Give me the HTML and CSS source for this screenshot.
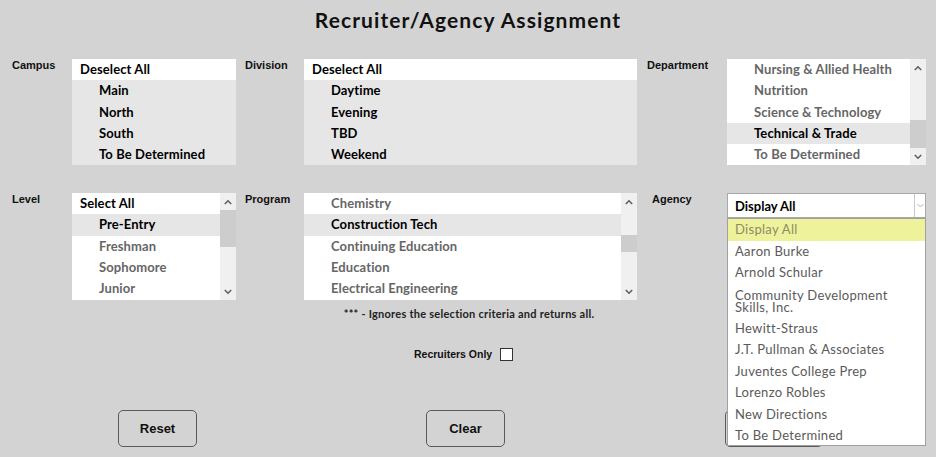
FILE: index.html
```html
<!DOCTYPE html>
<html lang="en">
<head>
<meta charset="utf-8">
<title>Recruiter/Agency Assignment</title>
<link rel="stylesheet" href="styles.css">
</head>
<body>
<div class="page">
  <h1 class="title">Recruiter/Agency Assignment</h1>

  <div class="grid">
    <div class="lbl">Campus</div>
    <div class="list">
      <div class="list-body">
        <div class="opt head">Deselect All</div>
        <div class="opt sel">Main</div>
        <div class="opt sel">North</div>
        <div class="opt sel">South</div>
        <div class="opt sel">To Be Determined</div>
      </div>
    </div>
    <div class="lbl lbl-mid">Division</div>
    <div class="list">
      <div class="list-body">
        <div class="opt head">Deselect All</div>
        <div class="opt sel">Daytime</div>
        <div class="opt sel">Evening</div>
        <div class="opt sel">TBD</div>
        <div class="opt sel">Weekend</div>
      </div>
    </div>
    <div class="lbl lbl-right">Department</div>
    <div class="list">
      <div class="list-body">
        <div class="opt">Nursing &amp; Allied Health</div>
        <div class="opt">Nutrition</div>
        <div class="opt">Science &amp; Technology</div>
        <div class="opt sel">Technical &amp; Trade</div>
        <div class="opt">To Be Determined</div>
      </div>
      <div class="sb">
        <div class="sb-arrow"><svg width="8" height="6" viewBox="0 0 8 6"><polyline points="0.8,5 4,1.8 7.2,5" fill="none" stroke="#606060" stroke-width="1.6"/></svg></div>
        <div class="sb-track"><div class="thumb thumb-dept"></div></div>
        <div class="sb-arrow"><svg width="8" height="6" viewBox="0 0 8 6"><polyline points="0.8,1 4,4.2 7.2,1" fill="none" stroke="#606060" stroke-width="1.6"/></svg></div>
      </div>
    </div>

    <div class="lbl row2">Level</div>
    <div class="list row2">
      <div class="list-body">
        <div class="opt head">Select All</div>
        <div class="opt sel">Pre-Entry</div>
        <div class="opt">Freshman</div>
        <div class="opt">Sophomore</div>
        <div class="opt">Junior</div>
      </div>
      <div class="sb">
        <div class="sb-arrow"><svg width="8" height="6" viewBox="0 0 8 6"><polyline points="0.8,5 4,1.8 7.2,5" fill="none" stroke="#606060" stroke-width="1.6"/></svg></div>
        <div class="sb-track"><div class="thumb thumb-level"></div></div>
        <div class="sb-arrow"><svg width="8" height="6" viewBox="0 0 8 6"><polyline points="0.8,1 4,4.2 7.2,1" fill="none" stroke="#606060" stroke-width="1.6"/></svg></div>
      </div>
    </div>
    <div class="lbl lbl-mid row2">Program</div>
    <div class="list row2">
      <div class="list-body">
        <div class="opt">Chemistry</div>
        <div class="opt sel">Construction Tech</div>
        <div class="opt">Continuing Education</div>
        <div class="opt">Education</div>
        <div class="opt">Electrical Engineering</div>
      </div>
      <div class="sb">
        <div class="sb-arrow"><svg width="8" height="6" viewBox="0 0 8 6"><polyline points="0.8,5 4,1.8 7.2,5" fill="none" stroke="#606060" stroke-width="1.6"/></svg></div>
        <div class="sb-track"><div class="thumb thumb-prog"></div></div>
        <div class="sb-arrow"><svg width="8" height="6" viewBox="0 0 8 6"><polyline points="0.8,1 4,4.2 7.2,1" fill="none" stroke="#606060" stroke-width="1.6"/></svg></div>
      </div>
    </div>
    <div class="lbl lbl-agency row2">Agency</div>
    <div class="select-wrap row2">
      <div class="select">
        <span class="select-val">Display All</span>
        <span class="select-btn"><svg width="7" height="5" viewBox="0 0 7 5"><polyline points="0.5,1 3.5,4 6.5,1" fill="none" stroke="#b0b0b0" stroke-width="1"/></svg></span>
      </div>
      <div class="dropdown">
        <div class="dd-item dd-hi">Display All</div>
        <div class="dd-item">Aaron Burke</div>
        <div class="dd-item">Arnold Schular</div>
        <div class="dd-item dd-two"><span class="dd-line">Community Development</span><span class="dd-line">Skills, Inc.</span></div>
        <div class="dd-item">Hewitt-Straus</div>
        <div class="dd-item">J.T. Pullman &amp; Associates</div>
        <div class="dd-item">Juventes College Prep</div>
        <div class="dd-item">Lorenzo Robles</div>
        <div class="dd-item">New Directions</div>
        <div class="dd-item">To Be Determined</div>
      </div>
    </div>
  </div>

  <p class="note">*** - Ignores the selection criteria and returns all.</p>

  <label class="recruiters">Recruiters Only <span class="check"></span></label>

  <div class="buttons">
    <button class="btn btn-reset">Reset</button>
    <button class="btn btn-clear">Clear</button>
    <button class="btn btn-search" aria-label="Search"></button>
  </div>
</div>
</body>
</html>
```

FILE: styles.css
```css
* { box-sizing: border-box; }

html, body {
  margin: 0;
  padding: 0;
}

body {
  background: #d3d3d3;
  width: 936px;
  height: 457px;
  overflow: hidden;
  font-family: "Lato", "DejaVu Sans", sans-serif;
  color: #000;
}

.page {
  width: 936px;
  height: 457px;
}

.title {
  margin: 0;
  padding-top: 7px;
  height: 59px;
  font-size: 21px;
  line-height: 25px;
  font-weight: 700;
  letter-spacing: 1.1px;
  text-align: center;
  color: #111;
}

.grid {
  display: grid;
  grid-template-columns: 60px 164px 68px 333px 90px 199px;
  grid-template-rows: 106px 107px;
  row-gap: 28px;
  padding-left: 12px;
}

.lbl {
  font-family: "Liberation Sans", Arial, sans-serif;
  font-weight: 700;
  font-size: 11px;
  line-height: 13px;
  color: #111;
}

.lbl-mid { padding-left: 9px; }
.lbl-right { padding-left: 10px; }
.lbl-agency { padding-left: 15px; }

.list {
  display: flex;
  background: #fff;
  height: 106px;
  overflow: hidden;
}

.list.row2 { height: 107px; }

.list-body {
  flex: 1;
  min-width: 0;
}

.opt {
  height: 21.3px;
  line-height: 21.3px;
  padding-left: 27px;
  font-size: 13px;
  font-weight: 700;
  letter-spacing: 0.1px;
  color: #666;
  white-space: nowrap;
}

.opt.head {
  padding-left: 8px;
  color: #000;
  background: #fff;
}

.opt.sel {
  background: #e6e6e6;
  color: #000;
}

.sb {
  width: 16px;
  background: #f0f0f0;
  display: flex;
  flex-direction: column;
}

.sb-arrow {
  height: 17px;
  display: flex;
  align-items: center;
  justify-content: center;
}

.sb-track {
  flex: 1;
}

.thumb {
  background: #cdcdcd;
}

.thumb-dept { margin-top: 44px; height: 28px; }
.thumb-level { margin-top: 0; height: 37px; }
.thumb-prog { margin-top: 25px; height: 17px; }

.select-wrap {
  position: relative;
  height: 25px;
}

.select {
  display: flex;
  height: 25px;
  background: #fff;
  border: 1px solid #a8a8a8;
}

.select-val {
  flex: 1;
  padding-left: 7px;
  font-size: 13px;
  font-weight: 700;
  line-height: 24px;
}

.select-btn {
  width: 11px;
  border-left: 1px solid #c8c8c8;
  display: flex;
  align-items: center;
  justify-content: center;
}

.dropdown {
  position: absolute;
  left: 0;
  top: 25px;
  width: 199px;
  height: 228px;
  background: #fff;
  border: 1px solid #a0a0a0;
  z-index: 5;
}

.dd-item {
  height: 21.5px;
  line-height: 21.5px;
  padding-left: 7px;
  font-size: 13px;
  letter-spacing: 0.3px;
  color: #5a5a5a;
  white-space: nowrap;
}

.dd-hi {
  background: #eef29a;
  color: #8c8c6a;
}

.dd-two {
  height: 34px;
  padding-top: 5px;
  display: flex;
  flex-direction: column;
}

.dd-line {
  height: 12px;
  line-height: 12px;
}

.note {
  margin: 7px 0 0;
  text-align: center;
  font-size: 11px;
  line-height: 14px;
  font-weight: 700;
  letter-spacing: 0.25px;
  color: #222;
  padding-left: 2px;
}

.recruiters {
  display: flex;
  align-items: center;
  margin: 26px 0 0 414px;
  height: 14px;
  font-family: "Liberation Sans", Arial, sans-serif;
  font-size: 10.5px;
  font-weight: 700;
  color: #111;
}

.check {
  display: inline-block;
  width: 13px;
  height: 13px;
  margin-left: 8px;
  border: 1px solid #333;
  background: #fff;
}

.buttons {
  display: flex;
  margin-top: 49px;
  padding-left: 118px;
}

.btn {
  height: 37px;
  background: #d3d3d3;
  border: 1px solid #5a5a5a;
  border-radius: 5px;
  font-family: "Liberation Sans", Arial, sans-serif;
  font-weight: 700;
  font-size: 13px;
  color: #111;
  padding: 0;
}

.btn-reset { width: 79px; }
.btn-clear { width: 79px; margin-left: 229px; }
.btn-search { width: 98px; margin-left: 220px; }
```
